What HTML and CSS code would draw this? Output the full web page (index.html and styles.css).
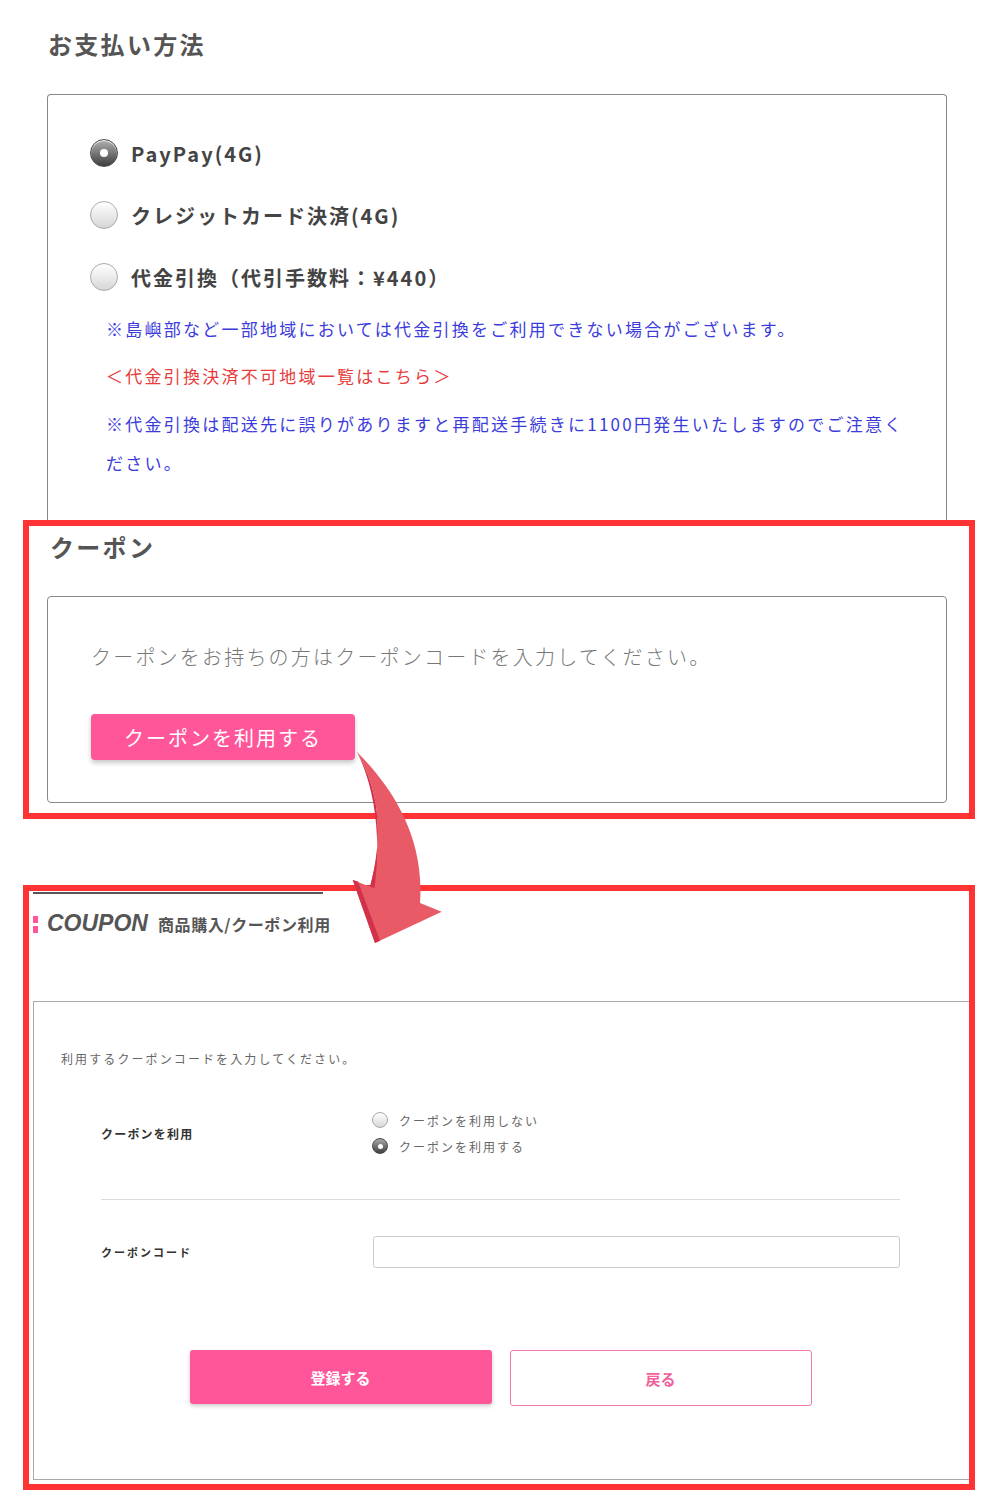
FILE: index.html
```html
<!DOCTYPE html>
<html lang="ja">
<head>
<meta charset="UTF-8">
<title>お支払い方法 / クーポン</title>
<link rel="stylesheet" href="styles.css">
</head>
<body>

<div class="page">

	<!-- お支払い方法 -->
	<h2 class="sec-title">お支払い方法</h2>
	<div class="pay-box">
		<div class="pay-row"><span class="radio-lg on"></span>PayPay(4G)</div>
		<div class="pay-row"><span class="radio-lg"></span>クレジットカード決済(4G)</div>
		<div class="pay-row"><span class="radio-lg"></span>代金引換（代引手数料：¥440）</div>
		<p class="note first">※島嶼部など一部地域においては代金引換をご利用できない場合がございます。</p>
		<p class="note red">＜代金引換決済不可地域一覧はこちら＞</p>
		<p class="note last">※代金引換は配送先に誤りがありますと再配送手続きに1100円発生いたしますのでご注意ください。</p>
	</div>

	<!-- クーポン (before) -->
	<div class="mark-box">
		<h2 class="sec-title coupon-title">クーポン</h2>
		<div class="coupon-box">
			<p class="coupon-msg">クーポンをお持ちの方はクーポンコードを入力してください。</p>
			<button type="button" class="btn-coupon">クーポンを利用する</button>
		</div>
	</div>

	<!-- クーポン (after) -->
	<div class="mark-box second">
		<div class="cp-head">
			<span class="cp-mark"></span><span class="cp-en">COUPON</span><span class="cp-ja">商品購入/クーポン利用</span>
		</div>
		<div class="cp-box">
			<p class="cp-intro">利用するクーポンコードを入力してください。</p>
			<div class="cp-form">
				<div class="cp-row first">
					<div class="cp-label">クーポンを利用</div>
					<div class="cp-opts">
						<div class="cp-opt"><span class="radio-sm"></span>クーポンを利用しない</div>
						<div class="cp-opt"><span class="radio-sm on"></span>クーポンを利用する</div>
					</div>
				</div>
				<div class="cp-row second">
					<div class="cp-label narrow">クーポンコード</div>
					<input type="text" class="cp-input">
				</div>
				<div class="cp-btns">
					<button type="button" class="btn-entry">登録する</button>
					<button type="button" class="btn-back">戻る</button>
				</div>
			</div>
		</div>
	</div>

	<!-- 矢印 -->
	<svg class="arrow" width="120" height="220" viewBox="0 0 120 220">
		<path d="M17,12 C50,45 85,95 80,163 L101.7,171.7 L35,203 L12.7,140 L30,146.7 C40,110 45,60 17,12 Z" fill="#e85a66"/>
		<path d="M30,146.7 C40,110 45,60 17,12 C36,50 41,100 34.5,148 Z" fill="#d1324a"/>
		<path d="M12.7,140 L35,203 L40,200.8 L18,141.6 Z" fill="#d1324a"/>
	</svg>

</div>

</body>
</html>
```

FILE: styles.css
```css
* { box-sizing: border-box; }
body { margin: 0; background: #fff; font-family: "Noto Sans CJK JP", "Noto Sans", sans-serif; color: #444; }
p { margin: 0; }

.page { position: relative; width: 1000px; padding-bottom: 10px; }

.sec-title { margin: 0; padding: 26px 0 0 48px; font-size: 24px; line-height: 36px; font-weight: bold; letter-spacing: 2.3px; color: #555; }

/* お支払い方法 */
.pay-box { margin: 32px 0 0 47px; width: 900px; border: 1px solid #888; border-bottom: none; border-radius: 4px 4px 0 0; padding: 27px 36px 38px 42px; }
.pay-row { display: flex; align-items: center; height: 62px; font-size: 20px; font-weight: bold; letter-spacing: 2px; color: #444; }

.radio-lg { width: 28px; height: 28px; border-radius: 50%; margin-right: 13px; border: 1px solid #a9a9a9; background: linear-gradient(#ffffff, #d6d6d6); box-shadow: inset 0 1px 1px #fff; position: relative; flex: none; letter-spacing: 0; }
.radio-lg.on { border-color: #4a4a4a; background: linear-gradient(#b0b0b0, #3e3e3e); }
.radio-lg.on::after { content: ""; position: absolute; left: 9px; top: 9px; width: 8px; height: 8px; border-radius: 50%; background: #fff; }

.note { margin-left: 16px; font-size: 17px; line-height: 39px; letter-spacing: 2.25px; color: #3c3cdc; }
.note.first { margin-top: 1px; }
.note.red { margin-top: 8px; color: #e83b3b; }
.note.last { margin-top: 9px; }

/* 赤枠 */
.mark-box { margin-left: 23px; width: 952px; border: 6px solid #ff3333; padding: 3px 0 10px 0; }
.mark-box.second { margin-top: 66px; padding: 1px 0 4px 0; }

.coupon-title { padding: 0 0 0 21px; }
.coupon-box { margin: 31px 0 0 18px; width: 900px; border: 1px solid #888; border-radius: 4px; padding: 45px 0 42px 43px; }
.coupon-msg { font-size: 20px; line-height: 30px; letter-spacing: 2.2px; color: #777; font-weight: 300; }
.btn-coupon { margin-top: 42px; width: 264px; height: 46px; border: none; border-radius: 4px; background: #ff5599; color: #fff; font-family: "Noto Sans CJK JP", sans-serif; font-size: 20px; letter-spacing: 2px; box-shadow: 0 3px 5px rgba(0,0,0,0.22); padding: 0; }

/* COUPON */
.cp-head { margin-left: 4px; width: 290px; border-top: 2px solid #555; padding-top: 12px; height: 48px; line-height: 34px; white-space: nowrap; }
.cp-mark { display: inline-block; width: 5px; height: 17px; vertical-align: -2px; margin-right: 9px; background: linear-gradient(#ff5599 0 7px, transparent 7px 10px, #ff5599 10px 17px); }
.cp-en { font-family: "Liberation Sans", Arial, sans-serif; font-style: italic; font-weight: bold; font-size: 23px; color: #555; }
.cp-ja { margin-left: 10px; font-size: 16px; font-weight: bold; letter-spacing: 0.6px; color: #555; }

.cp-box { margin: 61px 0 0 4px; border: 1px solid #aaa; border-right: none; padding: 47px 0 73px 27px; }
.cp-intro { font-size: 12px; line-height: 20px; letter-spacing: 2.1px; color: #666; }
.cp-form { margin-left: 40px; width: 799px; }
.cp-row { display: flex; align-items: center; }
.cp-row.first { padding: 38px 0 40px; border-bottom: 1px solid #ddd; }
.cp-row.second { padding-top: 36px; }
.cp-label { width: 271px; font-size: 12px; font-weight: bold; letter-spacing: 1.2px; color: #333; }
.cp-label.narrow { font-size: 11px; letter-spacing: 2px; }
.cp-opt { display: flex; align-items: center; height: 26px; font-size: 12px; letter-spacing: 2px; color: #666; }
.radio-sm { width: 16px; height: 16px; border-radius: 50%; margin-right: 11px; border: 1px solid #aaa; background: linear-gradient(#fff, #d8d8d8); position: relative; flex: none; }
.radio-sm.on { border-color: #4a4a4a; background: linear-gradient(#a8a8a8, #404040); }
.radio-sm.on::after { content: ""; position: absolute; left: 4.5px; top: 4.5px; width: 5px; height: 5px; border-radius: 50%; background: #fff; }
.cp-input { width: 527px; height: 32px; margin-left: 1px; border: 1px solid #ccc; border-radius: 3px; background: #fff; }

.cp-btns { display: flex; justify-content: center; gap: 18px; margin-top: 82px; height: 56px; }
.btn-entry, .btn-back { width: 302px; border-radius: 3px; font-family: "Noto Sans CJK JP", sans-serif; font-size: 15px; font-weight: bold; padding: 0; }
.btn-entry { height: 54px; border: none; background: #ff5599; color: #fff; box-shadow: 0 2px 4px rgba(0,0,0,0.2); }
.btn-back { height: 56px; border: 1px solid #f07aae; background: #fff; color: #f0609a; }

/* 矢印 */
.arrow { position: absolute; left: 340px; top: 740px; }
```
